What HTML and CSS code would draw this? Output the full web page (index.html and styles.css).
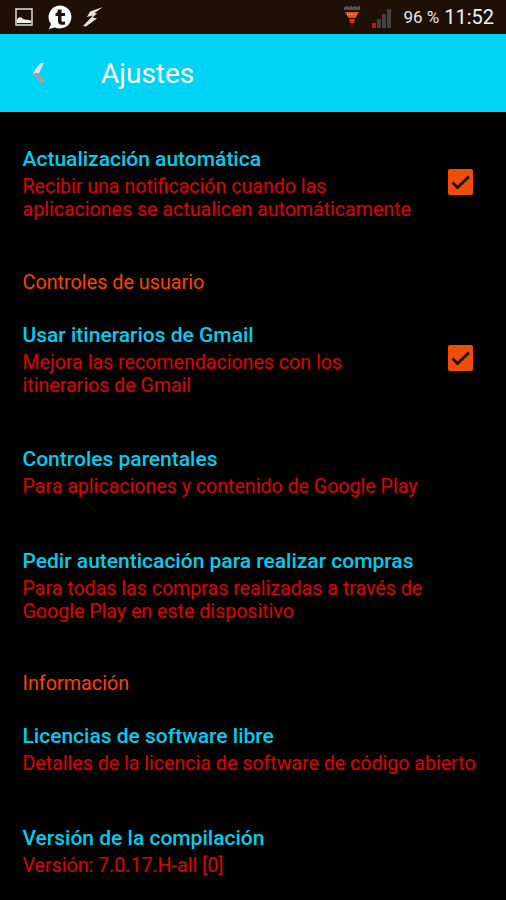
FILE: index.html
```html
<!DOCTYPE html>
<html lang="es">
<head>
<meta charset="utf-8">
<title>Ajustes</title>
<link rel="stylesheet" href="styles.css">
</head>
<body>
<div class="status">
  <div class="status-left">
    <svg class="ic-photo" width="18" height="18" viewBox="0 0 18 18"><rect x="1" y="1" width="16" height="16" fill="none" stroke="#d8d4d0" stroke-width="1.6"/><path d="M2 15V11.500C4 8.500 6 8.500 8 11C10 12 13 11.500 16 12.500V15Z" fill="#f2f0ee"/></svg>
    <svg class="ic-t" width="26" height="26" viewBox="0 0 26 26"><path d="M13 1.500A11.500 11.500 0 1 1 8 23.400L2 25L4 20A11.500 11.500 0 0 1 13 1.500Z" fill="#fff"/><path d="M11 5.500H14.500V9H18V12H14.500V16.500C14.500 18 16 18 18 17.500V20.500C14 21.500 11 20.500 11 17V12H8.500V9.500C10 9 11 7.500 11 5.500Z" fill="#1e0f07"/></svg>
    <svg class="ic-bolt" width="22" height="22" viewBox="0 0 22 22"><path d="M21 1L8 5.500L5 11L11 9.500L1 20L4 20.500L15 12.500L10.500 11.500L15 7.500L12.500 7Z" fill="#e2e2e0"/></svg>
  </div>
  <div class="status-right">
    <svg class="ic-funnel" width="18" height="24" viewBox="0 0 18 24"><path d="M1 2H3V1H5V2H7V1H9V2H11V1H13V2H15V1H17V5H1Z" fill="#55524f"/><path d="M2 7H16L12.500 13H5.500Z" fill="#f04e14"/><path d="M4 9.500H14" stroke="#ffd8c0" stroke-width="1" stroke-dasharray="1 1"/><path d="M6 14H12L11 18H7Z" fill="#e0280c"/><path d="M7.500 19H10.500V22H7.500Z" fill="#5c0a00"/></svg>
    <svg class="ic-signal" width="22" height="24" viewBox="0 0 22 24"><rect x="1" y="18" width="4" height="5" fill="#d01010"/><rect x="6" y="14" width="4" height="9" fill="#444240"/><rect x="11" y="9" width="4" height="14" fill="#444240"/><rect x="16" y="4" width="4" height="19" fill="#444240"/></svg>
    <span class="battery">96 %</span>
    <span class="clock">11:52</span>
  </div>
</div>
<header class="bar">
  <svg class="back" width="14" height="22" viewBox="0 0 14 22"><path d="M8 1L1 11L9 21L13 21L7 11L12 1Z" fill="#dfe2e2"/><path d="M1 11L9 21L13 21L7 11Z" fill="#9a9e9e"/></svg>
  <h1 class="bar-title">Ajustes</h1>
</header>
<main class="list">
  <section class="row">
    <div class="text">
      <h2 class="title">Actualización automática</h2>
      <p class="summary">Recibir una notificación cuando las<br>aplicaciones se actualicen automáticamente</p>
    </div>
    <span class="check"><svg width="25" height="26" viewBox="0 0 25 26"><path d="M4.500 13.500L9.500 18.500L21 7.500" fill="none" stroke="#1c0a02" stroke-width="2.800"/></svg></span>
  </section>
  <h3 class="category">Controles de usuario</h3>
  <section class="row">
    <div class="text">
      <h2 class="title">Usar itinerarios de Gmail</h2>
      <p class="summary">Mejora las recomendaciones con los<br>itinerarios de Gmail</p>
    </div>
    <span class="check"><svg width="25" height="26" viewBox="0 0 25 26"><path d="M4.500 13.500L9.500 18.500L21 7.500" fill="none" stroke="#1c0a02" stroke-width="2.800"/></svg></span>
  </section>
  <section class="row">
    <div class="text">
      <h2 class="title">Controles parentales</h2>
      <p class="summary">Para aplicaciones y contenido de Google Play</p>
    </div>
  </section>
  <section class="row">
    <div class="text">
      <h2 class="title">Pedir autenticación para realizar compras</h2>
      <p class="summary">Para todas las compras realizadas a través de<br>Google Play en este dispositivo</p>
    </div>
  </section>
  <h3 class="category">Información</h3>
  <section class="row">
    <div class="text">
      <h2 class="title">Licencias de software libre</h2>
      <p class="summary">Detalles de la licencia de software de código abierto</p>
    </div>
  </section>
  <section class="row">
    <div class="text">
      <h2 class="title">Versión de la compilación</h2>
      <p class="summary">Versión: 7.0.17.H-all [0]</p>
    </div>
  </section>
</main>
</body>
</html>
```
FILE: styles.css
```css
* { box-sizing: border-box; }
html, body { margin: 0; padding: 0; }
body {
  width: 506px;
  height: 900px;
  overflow: hidden;
  background: #000;
  font-family: Roboto, "Liberation Sans", sans-serif;
}
.status {
  height: 34px;
  background: #1e0f07;
  display: flex;
  justify-content: space-between;
  align-items: center;
  padding: 0 12px 0 15px;
}
.status-left, .status-right { display: flex; align-items: center; }
.ic-t { margin-left: 14px; }
.ic-bolt { margin-left: 9px; }
.ic-funnel { margin-right: 1px; }
.ic-signal { margin-left: 9px; }
.battery { margin-left: 10px; color: #e8e6e4; font-size: 17px; }
.clock { margin-left: 5px; color: #f4f4f4; font-size: 20px; }
.bar {
  height: 78px;
  background: #00d4f6;
  display: flex;
  align-items: center;
  padding-left: 32px;
}
.back { display: block; }
.bar-title {
  margin: 0 0 0 55px;
  color: #fff;
  font-size: 28px;
  font-weight: 400;
}
.list { padding-top: 9px; }
.row {
  display: flex;
  justify-content: space-between;
  align-items: center;
  padding: 25px 33px 24.5px 22.5px;
}
.title {
  margin: 0 0 3px;
  color: #00cdf0;
  font-size: 21px;
  line-height: 26px;
  font-weight: 500;
}
.summary {
  margin: 0;
  color: #e00000;
  font-size: 19.6px;
  line-height: 23px;
  white-space: nowrap;
}
.category {
  margin: 0;
  padding: 24px 22.5px 1px;
  color: #ff4000;
  font-size: 19.8px;
  line-height: 26px;
  font-weight: 400;
}
.check {
  width: 25px;
  height: 26px;
  margin-bottom: 3px;
  background: #f04d08;
  border-radius: 2px;
  flex: none;
}
.check svg { display: block; }
```
